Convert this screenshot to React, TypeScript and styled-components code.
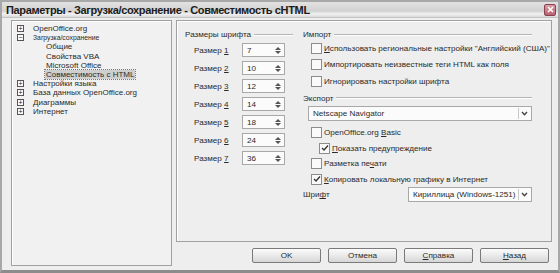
import React from "react";
import styled, { createGlobalStyle } from "styled-components";

const GlobalStyle = createGlobalStyle`
  html, body { margin: 0; padding: 0; background: #9a9a9a; }
  body { font-family: "Liberation Sans", Arial, sans-serif; }
  * { box-sizing: border-box; }
`;

const Window = styled.div`
  width: 560px;
  height: 273px;
  display: flex;
  flex-direction: column;
  background: #eeeeee;
  border: 2px solid #a8a8a8;
  border-bottom: 3px solid #8c8c8c;
  font-family: "Liberation Sans", Arial, sans-serif;
  font-size: 8.1px;
  color: #2a2a2a;
`;

const TitleBar = styled.div`
  height: 16px;
  flex: none;
  display: flex;
  align-items: center;
  justify-content: space-between;
  padding: 0 2px 0 4px;
  background: linear-gradient(#e2e2e2 0%, #d2d2d2 60%, #f2f2f2 80%, #d8d8d8 100%);
  border-bottom: 1px solid #c4c4c4;
`;

const Title = styled.span`
  font-weight: bold;
  font-size: 11px;
  color: #1c1c1c;
  letter-spacing: -0.35px;
`;

const CloseButton = styled.div`
  width: 12px;
  height: 12px;
  border-radius: 2px;
  background: linear-gradient(#d9a0a8, #b96070);
  border: 1px solid #8a4050;
  display: flex;
  align-items: center;
  justify-content: center;
`;

const Body = styled.div`
  flex: 1;
  display: flex;
  gap: 4px;
  padding: 2px 6px 4px 9px;
`;

const TreePanel = styled.div`
  width: 161px;
  background: #f1f1f1;
  border: 1px solid #a0a0a0;
  box-shadow: inset 1px 1px 0 #ffffff;
  padding: 3px 0 0 5px;
  display: flex;
  flex-direction: column;
`;

const TreeRow = styled.div<{ $level: number }>`
  height: 9.2px;
  display: flex;
  align-items: center;
  padding-left: ${(p) => (p.$level === 0 ? 0 : 28)}px;
  white-space: nowrap;
  line-height: 9px;
`;

const Expander = styled.span`
  width: 7px;
  height: 7px;
  border: 1px solid #555;
  margin-right: 8px;
  font-size: 7px;
  line-height: 5px;
  display: flex;
  align-items: center;
  justify-content: center;
  color: #222;
  background: #fafafa;
`;

const TreeLabel = styled.span<{ $selected?: boolean; $small?: boolean }>`
  padding: 0 1px;
  font-size: ${(p) => (p.$small ? 6.8 : 8)}px;
  background: ${(p) => (p.$selected ? "#cfcfcf" : "transparent")};
  outline: ${(p) => (p.$selected ? "1px dotted #777" : "none")};
`;

const RightColumn = styled.div`
  flex: 1;
  display: flex;
  flex-direction: column;
`;

const OptionsPanel = styled.div`
  height: 222px;
  border: 1px solid #a0a0a0;
  box-shadow: inset 1px 1px 0 #ffffff;
  display: flex;
  gap: 10px;
  padding: 8px 6px 0 8px;
`;

const Group = styled.div<{ $width: number }>`
  width: ${(p) => p.$width}px;
  display: flex;
  flex-direction: column;
`;

const GroupHeader = styled.div`
  display: flex;
  align-items: center;
  gap: 3px;
  height: 11px;
  white-space: nowrap;
  &::after {
    content: "";
    flex: 1;
    height: 0;
    border-top: 1px solid #b4b4b4;
    border-bottom: 1px solid #ffffff;
  }
`;

const SizeList = styled.div`
  display: flex;
  flex-direction: column;
  gap: 4px;
  padding: 3px 0 0 9px;
`;

const SizeRow = styled.div`
  display: flex;
  align-items: center;
  height: 14px;
`;

const SizeLabel = styled.span`
  width: 48px;
`;

const SpinBox = styled.div`
  width: 43px;
  height: 14px;
  background: #fbfbfb;
  border: 1px solid #a8a8a8;
  display: flex;
  align-items: center;
  justify-content: space-between;
  padding: 0 2px 0 4px;
`;

const SpinArrows = styled.span`
  width: 8px;
  display: flex;
  flex-direction: column;
  align-items: center;
  gap: 1px;
`;

const OptionList = styled.div`
  display: flex;
  flex-direction: column;
  padding-left: 8px;
`;

const CheckRow = styled.div<{ $indent?: number; $height: number }>`
  display: flex;
  align-items: center;
  gap: 2px;
  height: ${(p) => p.$height}px;
  padding-left: ${(p) => p.$indent ?? 0}px;
  white-space: nowrap;
`;

const Box = styled.span`
  width: 11px;
  height: 11px;
  flex: none;
  border: 1px solid #8c8c8c;
  background: #fafafa;
  display: flex;
  align-items: center;
  justify-content: center;
`;

const Dropdown = styled.div<{ $width: number }>`
  width: ${(p) => p.$width}px;
  height: 15px;
  background: #fbfbfb;
  border: 1px solid #a8a8a8;
  display: flex;
  align-items: center;
  justify-content: space-between;
  padding: 0 1px 0 4px;
  white-space: nowrap;
`;

const ExportDropdown = styled(Dropdown)`
  margin: 2px 0 4px -3px;
`;

const DropButton = styled.span`
  width: 12px;
  height: 11px;
  border-left: 1px solid #c8c8c8;
  display: flex;
  align-items: center;
  justify-content: center;
`;

const ExportSection = styled.div`
  display: flex;
  flex-direction: column;
  margin-top: 3px;
`;

const FontRow = styled.div`
  display: flex;
  align-items: center;
  justify-content: space-between;
  height: 15px;
`;

const ButtonRow = styled.div`
  display: flex;
  justify-content: flex-end;
  gap: 7px;
  padding: 6px 3px 0 0;
`;

const Button = styled.button`
  width: 69px;
  height: 15px;
  border: 1px solid #7a7a7a;
  border-radius: 2px;
  background: linear-gradient(#fbfbfb, #e6e6e6 60%, #d6d6d6);
  font-family: "Liberation Sans", Arial, sans-serif;
  font-size: 8.1px;
  color: #2a2a2a;
  padding: 0;
  line-height: 13px;
`;

const U = styled.span`
  text-decoration: underline;
`;

const Check = () => (
  <svg width="8" height="8" viewBox="0 0 8 8">
    <path d="M1 4 L3 6 L7 1.5" fill="none" stroke="#333" strokeWidth="1.3" />
  </svg>
);

const Chevron = () => (
  <svg width="7" height="5" viewBox="0 0 7 5">
    <path d="M1 1 L3.5 3.8 L6 1" fill="none" stroke="#444" strokeWidth="1.4" />
  </svg>
);

const Spin = () => (
  <SpinArrows>
    <svg width="6" height="3" viewBox="0 0 6 3">
      <path d="M0 3 L3 0 L6 3 Z" fill="#555" />
    </svg>
    <svg width="6" height="3" viewBox="0 0 6 3">
      <path d="M0 0 L3 3 L6 0 Z" fill="#555" />
    </svg>
  </SpinArrows>
);

const CheckBox = ({ checked }: { checked?: boolean }) => <Box>{checked ? <Check /> : null}</Box>;

const sizes = [7, 10, 12, 14, 18, 24, 36];

export default function App() {
  return (
    <>
      <GlobalStyle />
      <Window>
        <TitleBar>
          <Title>Параметры - Загрузка/сохранение - Совместимость cHTML</Title>
          <CloseButton>
            <svg width="7" height="7" viewBox="0 0 7 7">
              <path d="M1 1 L6 6 M6 1 L1 6" stroke="#fff" strokeWidth="1.5" />
            </svg>
          </CloseButton>
        </TitleBar>
        <Body>
          <TreePanel>
            <TreeRow $level={0}>
              <Expander>+</Expander>
              <TreeLabel>OpenOffice.org</TreeLabel>
            </TreeRow>
            <TreeRow $level={0}>
              <Expander>−</Expander>
              <TreeLabel $small>Загрузка/сохранение</TreeLabel>
            </TreeRow>
            <TreeRow $level={1}>
              <TreeLabel>Общие</TreeLabel>
            </TreeRow>
            <TreeRow $level={1}>
              <TreeLabel>Свойства VBA</TreeLabel>
            </TreeRow>
            <TreeRow $level={1}>
              <TreeLabel>Microsoft Office</TreeLabel>
            </TreeRow>
            <TreeRow $level={1}>
              <TreeLabel $selected>Совместимость с HTML</TreeLabel>
            </TreeRow>
            <TreeRow $level={0}>
              <Expander>+</Expander>
              <TreeLabel>Настройки языка</TreeLabel>
            </TreeRow>
            <TreeRow $level={0}>
              <Expander>+</Expander>
              <TreeLabel>База данных OpenOffice.org</TreeLabel>
            </TreeRow>
            <TreeRow $level={0}>
              <Expander>+</Expander>
              <TreeLabel>Диаграммы</TreeLabel>
            </TreeRow>
            <TreeRow $level={0}>
              <Expander>+</Expander>
              <TreeLabel>Интернет</TreeLabel>
            </TreeRow>
          </TreePanel>
          <RightColumn>
            <OptionsPanel>
              <Group $width={108}>
                <GroupHeader>Размеры шрифта</GroupHeader>
                <SizeList>
                  {sizes.map((s, i) => (
                    <SizeRow key={s}>
                      <SizeLabel>
                        Размер <U>{i + 1}</U>
                      </SizeLabel>
                      <SpinBox>
                        <span>{s}</span>
                        <Spin />
                      </SpinBox>
                    </SizeRow>
                  ))}
                </SizeList>
              </Group>
              <Group $width={229}>
                <GroupHeader>Импорт</GroupHeader>
                <OptionList>
                  <CheckRow $height={16.5}>
                    <CheckBox />
                    <span>
                      <U>И</U>спользовать региональные настройки "Английский (США)"
                    </span>
                  </CheckRow>
                  <CheckRow $height={16.5}>
                    <CheckBox />
                    <span>Импортировать неизвестные теги HTML как поля</span>
                  </CheckRow>
                  <CheckRow $height={16.5}>
                    <CheckBox />
                    <span>Игнорировать настройки шрифта</span>
                  </CheckRow>
                </OptionList>
                <ExportSection>
                  <GroupHeader>Экспорт</GroupHeader>
                  <OptionList>
                    <ExportDropdown $width={224}>
                      <span>Netscape Navigator</span>
                      <DropButton>
                        <Chevron />
                      </DropButton>
                    </ExportDropdown>
                    <CheckRow $height={15.7}>
                      <CheckBox />
                      <span>
                        OpenOffice.org <U>B</U>asic
                      </span>
                    </CheckRow>
                    <CheckRow $height={15.7} $indent={8}>
                      <CheckBox checked />
                      <span>
                        <U>П</U>оказать предупреждение
                      </span>
                    </CheckRow>
                    <CheckRow $height={15.7}>
                      <CheckBox />
                      <span>
                        Разметка пе<U>ч</U>ати
                      </span>
                    </CheckRow>
                    <CheckRow $height={15.7}>
                      <CheckBox checked />
                      <span>
                        <U>К</U>опировать локальную графику в Интернет
                      </span>
                    </CheckRow>
                  </OptionList>
                  <FontRow>
                    <span>
                      Шри<U>ф</U>т
                    </span>
                    <Dropdown $width={124}>
                      <span>Кириллица (Windows-1251)</span>
                      <DropButton>
                        <Chevron />
                      </DropButton>
                    </Dropdown>
                  </FontRow>
                </ExportSection>
              </Group>
            </OptionsPanel>
            <ButtonRow>
              <Button>OK</Button>
              <Button>Отмена</Button>
              <Button>
                <U>С</U>правка
              </Button>
              <Button>
                <U>Н</U>азад
              </Button>
            </ButtonRow>
          </RightColumn>
        </Body>
      </Window>
    </>
  );
}
